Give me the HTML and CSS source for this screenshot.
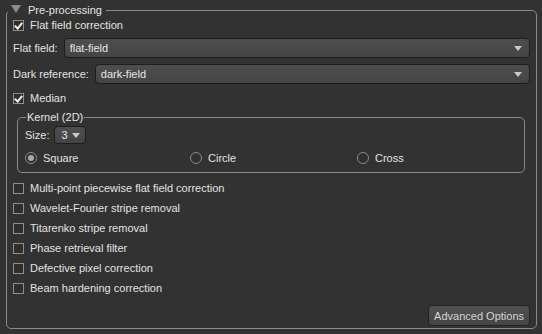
FILE: index.html
```html
<!DOCTYPE html>
<html lang="en">
<head>
  <meta charset="UTF-8" />
  <title>Pre-processing</title>
  <link rel="stylesheet" href="styles.css">
</head>
<body>
  <fieldset class="group">
    <legend class="group-title"><span class="arrow"></span>Pre-processing</legend>

    <label class="check-row"><span class="check on"></span>Flat field correction</label>

    <div class="field-row first">
      <span class="field-label">Flat field:</span>
      <div class="combo wide"><span>flat-field</span><span class="caret"></span></div>
    </div>

    <div class="field-row">
      <span class="field-label">Dark reference:</span>
      <div class="combo wide"><span>dark-field</span><span class="caret"></span></div>
    </div>

    <label class="check-row median"><span class="check on"></span>Median</label>

    <fieldset class="subgroup">
      <legend class="sub-title">Kernel (2D)</legend>
      <div class="size-row">
        <span class="field-label">Size:</span>
        <div class="combo small"><span>3</span><span class="caret"></span></div>
      </div>
      <div class="radio-row">
        <label class="radio-item"><span class="radio on"></span>Square</label>
        <label class="radio-item"><span class="radio"></span>Circle</label>
        <label class="radio-item"><span class="radio"></span>Cross</label>
      </div>
    </fieldset>

    <div class="options">
      <label class="check-row"><span class="check"></span>Multi-point piecewise flat field correction</label>
      <label class="check-row"><span class="check"></span>Wavelet-Fourier stripe removal</label>
      <label class="check-row"><span class="check"></span>Titarenko stripe removal</label>
      <label class="check-row"><span class="check"></span>Phase retrieval filter</label>
      <label class="check-row"><span class="check"></span>Defective pixel correction</label>
      <label class="check-row"><span class="check"></span>Beam hardening correction</label>
    </div>

    <div class="actions">
      <button class="btn">Advanced Options</button>
    </div>
  </fieldset>
</body>
</html>
```

FILE: styles.css
```css
html, body {
  margin: 0;
  height: 334px;
  overflow: hidden;
}

body {
  background: #323232;
  color: #e2e2e2;
  font-family: "Liberation Sans", Arial, sans-serif;
  font-size: 11px;
  line-height: 13px;
}

.group {
  margin: 4px 5px 0 6px;
  padding: 2px 6px 0 6px;
  border: 1px solid #8a8a8a;
  border-radius: 5px;
  box-sizing: border-box;
  height: 325px;
}

.group-title {
  padding: 0 4px 0 3px;
  margin-left: -5px;
  color: #e4e4e4;
}

.arrow {
  display: inline-block;
  width: 0;
  height: 0;
  border-left: 5px solid transparent;
  border-right: 5px solid transparent;
  border-top: 8px solid #8c8c8c;
  margin-right: 7px;
  vertical-align: 1px;
}

.check-row {
  display: flex;
  align-items: center;
  height: 12px;
  gap: 6px;
}

.check {
  position: relative;
  width: 9px;
  height: 9px;
  border: 1px solid #8e8e8e;
  background: #2e2e2e;
  flex: none;
}

.check.on::after {
  content: "";
  position: absolute;
  left: 2px;
  top: 0px;
  width: 3px;
  height: 6px;
  border-right: 2px solid #f0f0f0;
  border-bottom: 2px solid #f0f0f0;
  transform: rotate(40deg);
}

.field-row {
  display: flex;
  align-items: center;
  gap: 6px;
  margin-top: 6px;
  height: 20px;
}

.field-row.first {
  margin-top: 7px;
}

.combo {
  display: flex;
  align-items: center;
  justify-content: space-between;
  box-sizing: border-box;
  height: 20px;
  padding: 0 7px 0 5px;
  border: 1px solid #1c1c1c;
  border-radius: 4px;
  background: linear-gradient(#4e4e4e, #444444);
  color: #e6e6e6;
}

.combo.wide {
  flex: 1;
}

.combo.small {
  width: 32px;
  height: 18px;
  padding: 0 5px 0 6px;
}

.caret {
  width: 0;
  height: 0;
  border-left: 4px solid transparent;
  border-right: 4px solid transparent;
  border-top: 5px solid #c8c8c8;
}

.median {
  margin-top: 8px;
}

.subgroup {
  margin: 7px 5px 0 4px;
  padding: 2px 7px 0 7px;
  height: 62px;
  box-sizing: border-box;
  border: 1px solid #8a8a8a;
  border-radius: 5px;
}

.sub-title {
  padding: 0 1px;
  margin-left: 1px;
  color: #e4e4e4;
}

.size-row {
  display: flex;
  align-items: center;
  gap: 5px;
  height: 18px;
}

.radio-row {
  display: grid;
  grid-template-columns: 165px 167px 1fr;
  margin-top: 8px;
}

.radio-item {
  display: flex;
  align-items: center;
  gap: 6px;
  height: 12px;
}

.radio {
  position: relative;
  width: 10px;
  height: 10px;
  border: 1px solid #8a8a8a;
  border-radius: 50%;
  background: #303030;
  flex: none;
}

.radio.on::after {
  content: "";
  position: absolute;
  left: 2px;
  top: 2px;
  width: 6px;
  height: 6px;
  border-radius: 50%;
  background: #a9a9a9;
}

.options {
  display: flex;
  flex-direction: column;
  gap: 8px;
  margin-top: 9px;
}

.actions {
  display: flex;
  justify-content: flex-end;
  margin-top: 11px;
}

.btn {
  font-family: inherit;
  font-size: 11px;
  color: #d6d6d6;
  height: 21px;
  padding: 0 5px;
  border: 1px solid #222;
  border-radius: 4px;
  background: linear-gradient(#505050, #454545);
}
```
